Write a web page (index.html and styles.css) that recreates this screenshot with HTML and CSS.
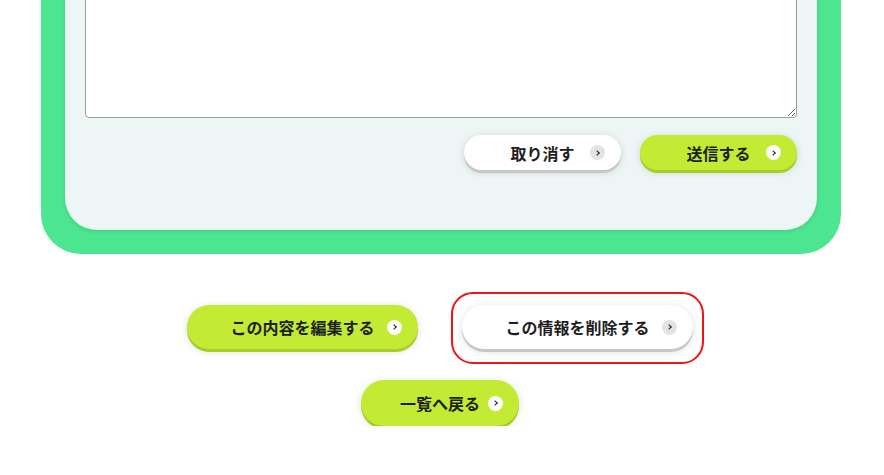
FILE: index.html
```html
<!DOCTYPE html>
<html lang="ja">
<head>
<meta charset="utf-8">
<title>確認</title>
<link rel="stylesheet" href="styles.css">
</head>
<body>
  <div class="frame">
    <div class="panel">
      <textarea class="memo"></textarea>
      <div class="form-actions">
        <button class="btn btn-white btn-sm" type="button">取り消す<span class="arrow"></span></button>
        <button class="btn btn-lime btn-sm" type="submit">送信する<span class="arrow"></span></button>
      </div>
    </div>
  </div>
  <div class="page-actions">
    <div class="action-row">
      <button class="btn btn-lime btn-lg" type="button">この内容を編集する<span class="arrow"></span></button>
      <button class="btn btn-white btn-lg focused" type="button">この情報を削除する<span class="arrow"></span></button>
    </div>
    <div class="action-row">
      <button class="btn btn-lime btn-back" type="button">一覧へ戻る<span class="arrow"></span></button>
    </div>
  </div>
</body>
</html>
```
FILE: styles.css
```css
* { box-sizing: border-box; }
html, body { margin: 0; padding: 0; background: #ffffff; }
body {
  font-family: "Noto Sans CJK JP", "Noto Sans", sans-serif;
  color: #1e1e1e;
}
.frame {
  width: 800px;
  margin: -10px 0 0 41px;
  background: #4be68f;
  border-radius: 0 0 40px 40px;
  padding: 0 24px 24px;
}
.panel {
  background: #eef6f5;
  border-radius: 0 0 32px 32px;
  padding: 0 20px 60px;
  box-shadow: 0 1px 4px rgba(0, 0, 0, 0.12);
}
.memo {
  display: block;
  width: 712px;
  height: 128px;
  margin: 0;
  border: 1px solid #9e9e9e;
  border-radius: 4px;
  background: #ffffff;
  font: inherit;
}
.form-actions {
  display: flex;
  justify-content: flex-end;
  gap: 19px;
  margin-top: 17px;
}
.btn {
  position: relative;
  display: flex;
  align-items: center;
  justify-content: center;
  border: none;
  border-radius: 999px;
  font-family: "Noto Sans CJK JP", sans-serif;
  font-weight: 700;
  font-size: 16px;
  color: #1e1e1e;
  padding: 0;
  cursor: pointer;
}
.btn-white {
  background: #ffffff;
  box-shadow: 0 3px 0 #c7c7c7, 0 2px 9px rgba(0, 0, 0, 0.14);
}
.btn-lime {
  background: #c3eb34;
  box-shadow: 0 3px 0 #a5ce28, 0 2px 9px rgba(0, 0, 0, 0.14);
}
.btn-sm { width: 157px; height: 35px; }
.btn-lg { width: 231px; height: 44px; }
.btn-back { width: 158px; height: 46px; }
.arrow {
  position: absolute;
  right: 16px;
  top: 50%;
  width: 15px;
  height: 15px;
  margin-top: -7.5px;
  border-radius: 50%;
  background: #ffffff;
}
.btn-white .arrow { background: #e3e3e3; }
.arrow::after {
  content: "";
  position: absolute;
  left: 5px;
  top: 5.5px;
  width: 3px;
  height: 3px;
  border-top: 1.5px solid #222;
  border-right: 1.5px solid #222;
  transform: rotate(45deg);
}
.page-actions {
  display: flex;
  flex-direction: column;
  align-items: center;
  gap: 31px;
  margin-top: 51px;
  padding-right: 4px;
}
.action-row {
  display: flex;
  justify-content: center;
  gap: 44px;
}
.focused::before {
  content: "";
  position: absolute;
  inset: -13px -11px -15px -11px;
  border: 2.5px solid #f01414;
  border-radius: 22px;
  pointer-events: none;
}
```
